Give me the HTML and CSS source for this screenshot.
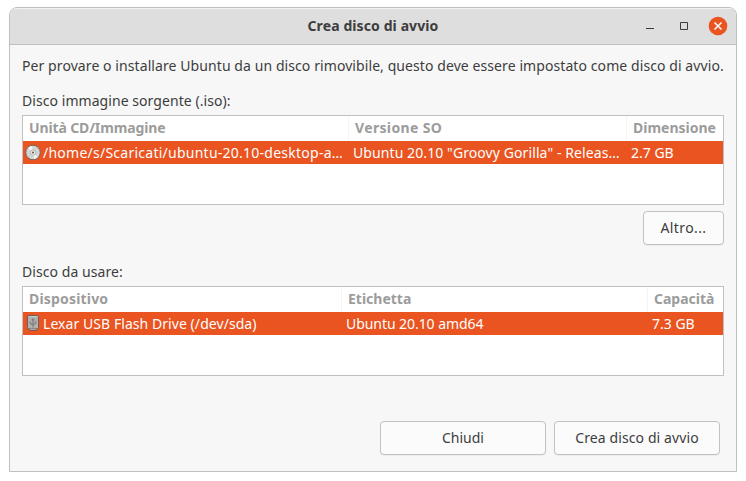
FILE: index.html
```html
<!DOCTYPE html>
<html lang="it">
<head>
<meta charset="utf-8">
<title>Crea disco di avvio</title>
<link rel="stylesheet" href="styles.css">
</head>
<body>
<main class="window">
  <header class="titlebar">
    <h1 class="title">Crea disco di avvio</h1>
    <div class="controls">
      <svg width="100" height="20" viewBox="0 0 100 20">
        <path d="M18 12.5h8" stroke="#3d3d3d" fill="none"/>
        <path d="M52.5 6.5h7v7h-7z" stroke="#3d3d3d" fill="none"/>
        <circle cx="90" cy="10" r="9.3" fill="#e95420"/>
        <path d="M86.5 6.5l7 7m0-7l-7 7" stroke="#fff" stroke-width="1.5" fill="none"/>
      </svg>
    </div>
  </header>
  <section class="content">
    <p class="intro">Per provare o installare Ubuntu da un disco rimovibile, questo deve essere impostato come disco di avvio.</p>
    <p class="label">Disco immagine sorgente (.iso):</p>
    <div class="list">
      <div class="row head source-cols">
        <span class="h-image">Unità CD/Immagine</span><span class="h-version">Versione SO</span><span>Dimensione</span>
      </div>
      <div class="row selected source-cols">
        <span class="t-path"><svg class="icon" width="16" height="16" viewBox="0 0 16 16">
          <circle cx="8" cy="7.5" r="7.3" fill="#d4d4d1" stroke="#70645d"/>
          <path d="M8 7.5L3 2.9A6.6 6.6 0 0 1 7 1zM8 7.5l5 4.6A6.6 6.6 0 0 1 9 14z" fill="#f3f3f2"/>
          <circle cx="8" cy="7.5" r="2.6" fill="#eee" stroke="#a7a7a4" stroke-width=".8"/>
          <circle cx="8" cy="7.5" r="1.1" fill="#62605d"/>
        </svg>/home/s/Scaricati/ubuntu-20.10-desktop-a…</span><span class="t-release">Ubuntu 20.10 "Groovy Gorilla" - Releas…</span><span>2.7 GB</span>
      </div>
    </div>
    <div class="more"><button class="btn other">Altro...</button></div>
    <p class="label">Disco da usare:</p>
    <div class="list">
      <div class="row head target-cols">
        <span class="h-device">Dispositivo</span><span>Etichetta</span><span>Capacità</span>
      </div>
      <div class="row selected target-cols">
        <span class="t-device"><svg class="icon" width="16" height="16" viewBox="0 0 16 16">
          <path d="M4.5 12.5h7v2h-7z" fill="#f0efed" stroke="#8c5745"/>
          <rect x="2.5" y="-.5" width="11" height="13.5" rx="1.5" fill="#b0b0ae" stroke="#67605c"/>
          <path d="M3.5 .5h9" stroke="#c9c9c7"/>
          <path d="M8 3v8.5M5.3 5.5v1.7L8 9.2l2.7-2.2V5.2M6.7 4.3L8 2.8l1.3 1.5" stroke="#7e7e7c" stroke-width="1.2" fill="none"/>
        </svg>Lexar USB Flash Drive (/dev/sda)</span><span class="t-tag">Ubuntu 20.10 amd64</span><span>7.3 GB</span>
      </div>
    </div>
    <footer class="actions"><button class="btn close">Chiudi</button><button class="btn create">Crea disco di avvio</button></footer>
  </section>
</main>
</body>
</html>
```
FILE: styles.css
```css
* { box-sizing: border-box; }
body { margin: 0; background: #fff; font: 14px/20px "Noto Sans", sans-serif; color: #3d3d3d; }
.window { width: 728px; height: 465px; margin: 7px 0 0 9px; border: 1px solid #bfbfbf; border-radius: 8px 8px 0 0; background: #f7f7f7; overflow: hidden; }
.titlebar { height: 37px; display: grid; grid-template-columns: 1fr auto 1fr; align-items: center; background: #dedede; border-bottom: 1px solid #bfbfbf; box-shadow: inset 0 1px #f2f2f2; }
.title { grid-column: 2; margin: 0; font-size: 14px; font-weight: 700; letter-spacing: .1px; }
.controls { justify-self: end; height: 20px; padding-right: 8px; }
.controls svg, .icon { display: block; overflow: visible; }
.content { padding: 0 12px; }
p { margin: 0; white-space: nowrap; }
.intro { padding-top: 11px; height: 46px; letter-spacing: .083px; }
.label { height: 24px; letter-spacing: .06px; }
.list { height: 90px; background: #fff; border: 1px solid #c0c0c0; }
.row { display: grid; height: 23px; white-space: nowrap; }
.source-cols { grid-template-columns: 326px 278px 1fr; }
.target-cols { grid-template-columns: 319px 306px 1fr; }
.head { height: 25px; color: #9c9c9c; font-weight: 700; }
.head span { height: 25px; line-height: 24px; padding-left: 6px; border-right: 1px solid #f4f4f4; }
.head span:last-child { border: 0; }
.selected { background: #e95420; color: #fff; line-height: 24px; }
.selected span { height: 24px; padding-left: 4px; display: flex; align-items: center; }
.selected span:first-child { padding-left: 2px; }
.h-image { letter-spacing: -.13px; }
.h-version { letter-spacing: .35px; }
.h-device { letter-spacing: .18px; }
.t-path { letter-spacing: .25px; }
.t-release { letter-spacing: .09px; }
.t-device { letter-spacing: .06px; }
.t-tag { letter-spacing: -.06px; }
.icon { margin-right: 2px; flex: none; }
.more { display: flex; justify-content: flex-end; padding-top: 6px; height: 57px; }
.btn { height: 34px; padding: 0; border: 1px solid #c2c2c2; border-radius: 4px; background: #fbfbfb; color: #3d3d3d; font: inherit; box-shadow: 0 1px 1px #0000000d; }
.other { width: 81px; letter-spacing: .4px; }
.actions { display: flex; justify-content: flex-end; gap: 8px; padding: 45px 4px 0 0; }
.close, .create { width: 166px; }
.create { letter-spacing: .1px; }
```
